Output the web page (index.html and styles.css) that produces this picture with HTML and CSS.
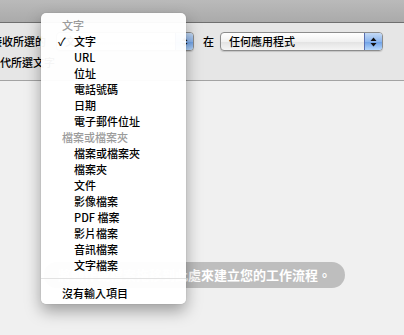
FILE: index.html
```html
<!DOCTYPE html>
<html lang="zh-Hant">
<head>
    <meta charset="UTF-8">
    <meta name="viewport" content="width=device-width, initial-scale=1.0">
    <title>工作流程</title>
    <link rel="stylesheet" href="styles.css">
</head>
<body>
    <div class="titlebar"></div>

    <div class="header">
        <div class="row">
            <span class="label first">工作流程接收所選的</span>
            <div class="popup small">
                <span class="popup-text">文字</span>
                <span class="stepper">
                    <svg width="7" height="10" viewBox="0 0 7 10"><path d="M3.5 0.5 L6.5 4 L0.5 4 Z M0.5 6 L6.5 6 L3.5 9.5 Z" fill="#111"/></svg>
                </span>
            </div>
            <span class="label in">在</span>
            <div class="popup wide">
                <span class="popup-text">任何應用程式</span>
                <span class="stepper">
                    <svg width="7" height="10" viewBox="0 0 7 10"><path d="M3.5 0.5 L6.5 4 L0.5 4 Z M0.5 6 L6.5 6 L3.5 9.5 Z" fill="#111"/></svg>
                </span>
            </div>
        </div>
        <div class="row second">
            <span class="label">取代所選文字</span>
        </div>
    </div>

    <div class="canvas">
        <div class="hint">將動作或檔案拖移到此處來建立您的工作流程。</div>
    </div>

    <!-- popup menu lies over the header and the canvas -->
    <div class="menu">
        <div class="menu-head">文字</div>
        <div class="menu-item"><span class="check">✓</span>文字</div>
        <div class="menu-item"><span class="check"></span>URL</div>
        <div class="menu-item"><span class="check"></span>位址</div>
        <div class="menu-item"><span class="check"></span>電話號碼</div>
        <div class="menu-item"><span class="check"></span>日期</div>
        <div class="menu-item"><span class="check"></span>電子郵件位址</div>
        <div class="menu-head">檔案或檔案夾</div>
        <div class="menu-item"><span class="check"></span>檔案或檔案夾</div>
        <div class="menu-item"><span class="check"></span>檔案夾</div>
        <div class="menu-item"><span class="check"></span>文件</div>
        <div class="menu-item"><span class="check"></span>影像檔案</div>
        <div class="menu-item"><span class="check"></span>PDF 檔案</div>
        <div class="menu-item"><span class="check"></span>影片檔案</div>
        <div class="menu-item"><span class="check"></span>音訊檔案</div>
        <div class="menu-item"><span class="check"></span>文字檔案</div>
        <div class="menu-sep"></div>
        <div class="menu-head plain">沒有輸入項目</div>
    </div>
</body>
</html>
```

FILE: styles.css
```css
body {
    margin: 0;
    width: 404px;
    height: 335px;
    overflow: hidden;
    background-color: #f0f0f0;
    font-family: "Noto Sans CJK TC", "Liberation Sans", sans-serif;
    font-size: 11px;
    font-weight: 500;
    color: #000000;
    display: flex;
    flex-direction: column;
}

.titlebar {
    height: 22px;
    background: linear-gradient(#bababa, #aaaaaa);
    border-bottom: 1px solid #6f6f6f;
    flex: none;
}

.header {
    height: 57px;
    background-color: #e6e6e6;
    border-bottom: 1px solid #a3a3a3;
    flex: none;
    overflow: hidden;
}

.row {
    display: flex;
    align-items: center;
    height: 19px;
    margin-top: 9px;
    margin-left: -53px;
}

.row.second {
    margin-top: 2px;
    margin-left: -11px;
}

.label {
    white-space: nowrap;
    line-height: 19px;
}

.label.in {
    margin-left: 9px;
}

.popup {
    display: flex;
    align-items: center;
    height: 17px;
    border: 1px solid #8c8c8c;
    border-radius: 4px;
    background: linear-gradient(#ffffff, #f1f1f1 50%, #e2e2e2 51%, #f5f5f5);
    box-shadow: 0 1px 1px rgba(0, 0, 0, 0.15);
    overflow: hidden;
    flex: none;
}

.popup.small {
    width: 136px;
    margin-left: 10px;
}

.popup.wide {
    width: 161px;
    margin-left: 6px;
}

.popup-text {
    flex: 1;
    padding-left: 8px;
    line-height: 17px;
}

.stepper {
    width: 17px;
    height: 17px;
    display: flex;
    align-items: center;
    justify-content: center;
    background: linear-gradient(#c4daf6, #8db6ee 50%, #6b9fe6 51%, #b5d6fb);
    border-left: 1px solid #5a6fb0;
}

.canvas {
    flex: 1;
    display: flex;
    justify-content: flex-end;
    align-items: flex-start;
    padding-top: 181px;
    padding-right: 59px;
}

.hint {
    height: 26px;
    line-height: 26px;
    padding: 0 14px;
    border-radius: 13px;
    background-color: #bebebe;
    color: #ffffff;
    font-size: 13px;
    font-weight: bold;
    white-space: nowrap;
}

.menu {
    position: absolute;
    left: 41px;
    top: 13px;
    width: 145px;
    padding: 4px 0 3px;
    background-color: rgba(255, 255, 255, 0.96);
    border-radius: 5px;
    box-shadow: 0 7px 16px rgba(0, 0, 0, 0.35), 0 0 1px rgba(0, 0, 0, 0.3);
}

.menu-head {
    height: 16px;
    line-height: 16px;
    padding-left: 21px;
    color: #9b9b9b;
}

.menu-head.plain {
    color: #000000;
}

.menu-item {
    display: flex;
    height: 16px;
    line-height: 16px;
    padding-left: 17px;
}

.check {
    width: 16px;
    flex: none;
}

.menu-sep {
    height: 1px;
    margin: 5px 0 6px;
    background-color: #e2e2e2;
}
```
